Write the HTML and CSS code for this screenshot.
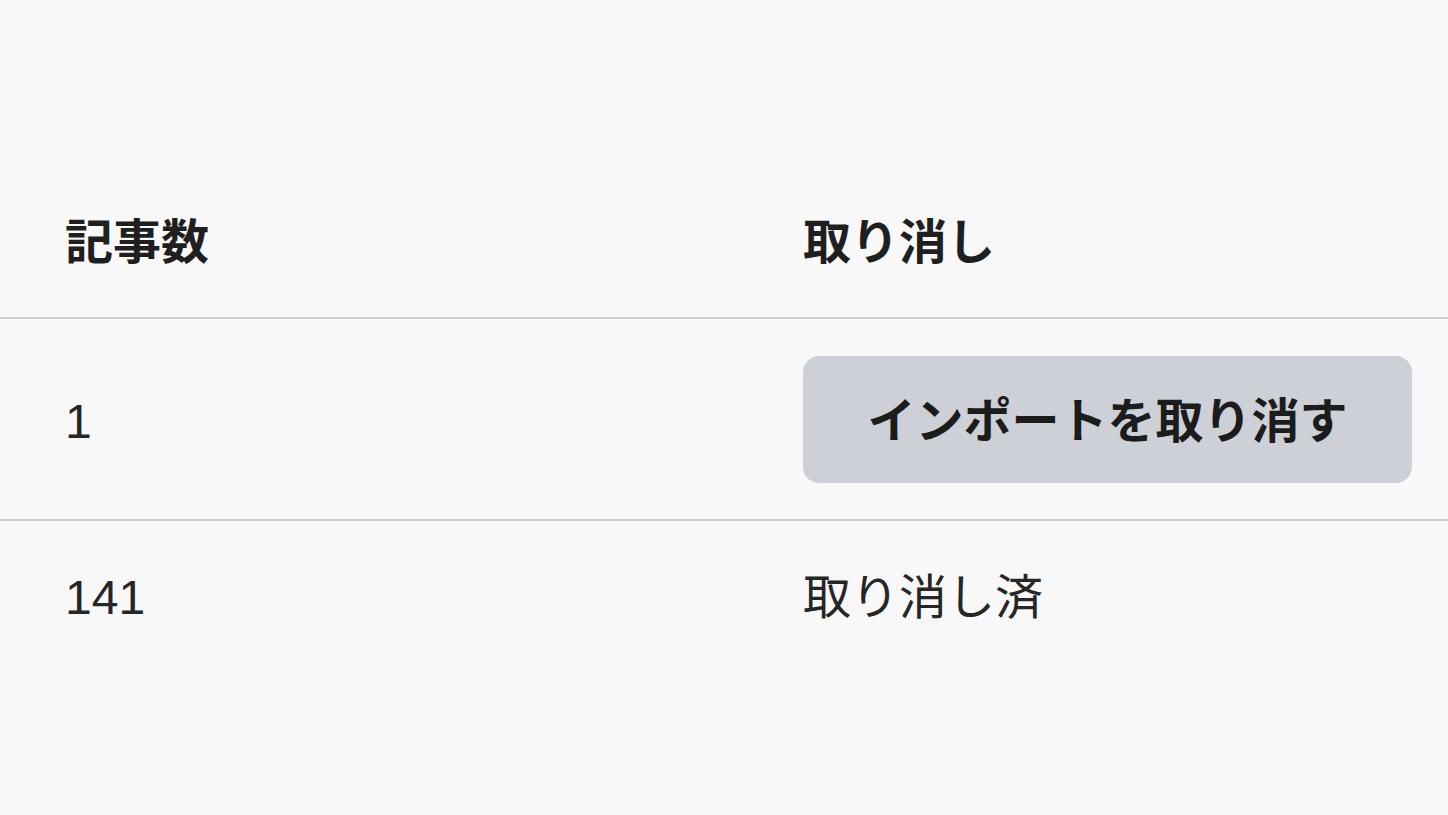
FILE: index.html
```html
<!DOCTYPE html>
<html lang="ja">
  <head>
    <title>インポート履歴</title>
    <meta charset="utf-8" />
    <link rel="stylesheet" href="styles.css">
  </head>
  <body>
    <div class="container">
      <table class="import-table">
        <colgroup>
          <col class="col-count" />
          <col class="col-action" />
        </colgroup>
        <thead>
          <tr>
            <th>記事数</th>
            <th class="action">取り消し</th>
          </tr>
        </thead>
        <tbody>
          <tr class="row-button">
            <td>1</td>
            <td class="action">
              <button type="button" class="undo-button">インポートを取り消す</button>
            </td>
          </tr>
          <tr class="row-done">
            <td>141</td>
            <td class="action">取り消し済</td>
          </tr>
        </tbody>
      </table>
    </div>
  </body>
</html>
```

FILE: styles.css
```css
body {
  margin: 0;
  background-color: #f8f8f8;
  color: #262626;
  font-family: 'Liberation Sans', 'Noto Sans CJK JP', sans-serif;
}

.container {
  padding-top: 183px;
}

.import-table {
  width: 100%;
  border-collapse: collapse;
  table-layout: fixed;
  font-size: 48px;
  line-height: 60px;
}

.col-count {
  width: 738px;
}

.import-table th,
.import-table td {
  text-align: left;
  padding: 0 36px 0 65px;
  vertical-align: top;
}

.import-table th {
  color: #1f1f1f;
  font-weight: bold;
  padding-top: 30px;
  padding-bottom: 44px;
  border-bottom: 2px solid #cfd0d3;
}

.row-button td {
  padding-top: 37px;
  padding-bottom: 36px;
  border-bottom: 2px solid #cfd0d3;
}

.row-button td:first-child {
  padding-top: 73px;
}

.row-done td {
  padding-top: 47px;
  padding-bottom: 60px;
}

.import-table .action {
  padding-left: 65px;
}

.undo-button {
  display: block;
  width: 100%;
  height: 127px;
  padding-bottom: 6px;
  border: none;
  border-radius: 16px;
  background-color: #cdd0d6;
  color: #1c1c1c;
  font-family: 'Liberation Sans', 'Noto Sans CJK JP', sans-serif;
  font-size: 48px;
  font-weight: bold;
  cursor: pointer;
}
```
